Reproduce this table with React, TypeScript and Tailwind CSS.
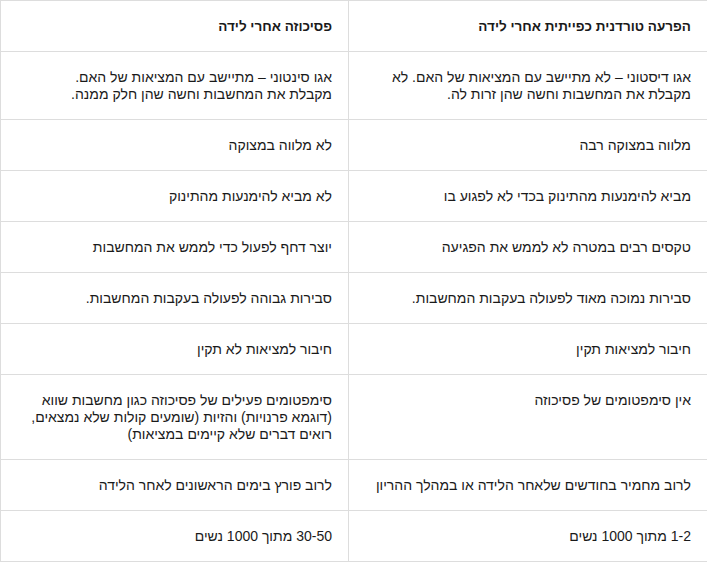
const rows: [React.ReactNode, React.ReactNode][] = [
  [
    <>אגו דיסטוני – לא מתיישב עם המציאות של האם. לא<br />מקבלת את המחשבות וחשה שהן זרות לה.</>,
    <>אגו סינטוני – מתיישב עם המציאות של האם.<br />מקבלת את המחשבות וחשה שהן חלק ממנה.</>,
  ],
  ["מלווה במצוקה רבה", "לא מלווה במצוקה"],
  ["מביא להימנעות מהתינוק בכדי לא לפגוע בו", "לא מביא להימנעות מהתינוק"],
  ["טקסים רבים במטרה לא לממש את הפגיעה", "יוצר דחף לפעול כדי לממש את המחשבות"],
  ["סבירות נמוכה מאוד לפעולה בעקבות המחשבות.", "סבירות גבוהה לפעולה בעקבות המחשבות."],
  ["חיבור למציאות תקין", "חיבור למציאות לא תקין"],
  [
    "אין סימפטומים של פסיכוזה",
    <>סימפטומים פעילים של פסיכוזה כגון מחשבות שווא<br />(דוגמא פרנויות) והזיות (שומעים קולות שלא נמצאים,<br />רואים דברים שלא קיימים במציאות)</>,
  ],
  ["לרוב מחמיר בחודשים שלאחר הלידה או במהלך ההריון", "לרוב פורץ בימים הראשונים לאחר הלידה"],
  ["1-2 מתוך 1000 נשים", "30-50 מתוך 1000 נשים"],
];

const cell = "border border-[#dddddd] align-top text-right pt-[17px] pb-[16px] pr-4 pl-4 leading-[17px]";

export default function App() {
  return (
    <div className="w-[707px] h-[564px] bg-white font-['Liberation_Sans',Arial,sans-serif] text-[14px] text-[#1a1a1a]">
      <table dir="rtl" className="w-[707px] table-fixed border-collapse">
        <colgroup>
          <col className="w-[359px]" />
          <col className="w-[348px]" />
        </colgroup>
        <thead>
          <tr>
            <th className={cell + " font-bold text-[13.5px]"}>הפרעה טורדנית כפייתית אחרי לידה</th>
            <th className={cell + " font-bold text-[13.5px]"}>פסיכוזה אחרי לידה</th>
          </tr>
        </thead>
        <tbody>
          {rows.map((r, i) => (
            <tr key={i}>
              <td className={cell}>{r[0]}</td>
              <td className={cell}>{r[1]}</td>
            </tr>
          ))}
        </tbody>
      </table>
    </div>
  );
}
